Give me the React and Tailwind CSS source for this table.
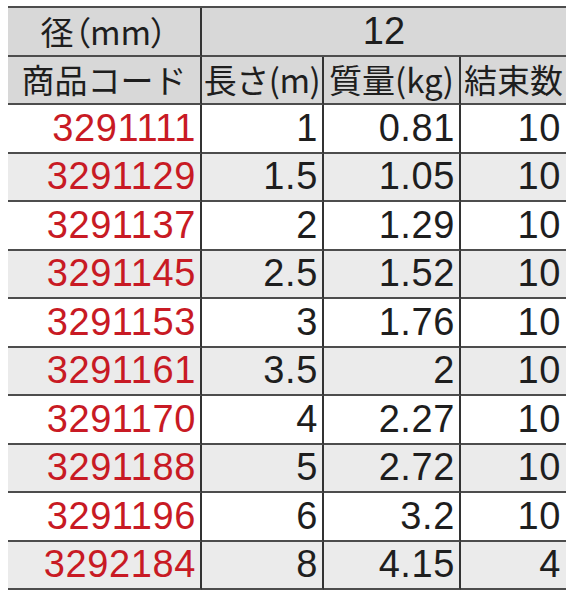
const rows = [
  ["3291111", "1", "0.81", "10"],
  ["3291129", "1.5", "1.05", "10"],
  ["3291137", "2", "1.29", "10"],
  ["3291145", "2.5", "1.52", "10"],
  ["3291153", "3", "1.76", "10"],
  ["3291161", "3.5", "2", "10"],
  ["3291170", "4", "2.27", "10"],
  ["3291188", "5", "2.72", "10"],
  ["3291196", "6", "3.2", "10"],
  ["3292184", "8", "4.15", "4"],
];

const cell = "h-[48.5px] flex items-center border-b-2 border-[#4d4d4d]";
const divider = "border-r-2 border-r-[#333]";
const head = "justify-center whitespace-nowrap bg-[#d8d8d8] text-[33px] leading-none font-['Noto_Sans_CJK_JP',sans-serif]";
const num = "justify-end text-[38px] tracking-[0.6px]";

export default function App() {
  return (
    <div className="min-h-[600px] bg-white pt-[6px] pl-[8px] font-['Liberation_Sans','Noto_Sans_CJK_JP',sans-serif] text-[#1e1e1e]">
      <div className="grid w-[558px] grid-cols-[194px_122px_137px_105px] border-t-2 border-[#4d4d4d]">
        {/* Header */}
        <div className={`${cell} ${divider} ${head} [font-feature-settings:'palt']`}>径（mm）</div>
        <div className={`${cell} col-span-3 justify-center bg-[#d8d8d8] text-[38px]`}>12</div>
        <div className={`${cell} ${divider} ${head}`}>商品コード</div>
        <div className={`${cell} ${divider} ${head} tracking-[-0.5px]`}>長さ(m)</div>
        <div className={`${cell} ${divider} ${head}`}>質量(kg)</div>
        <div className={`${cell} ${head}`}>結束数</div>

        {/* Rows */}
        {rows.map((r, i) => {
          const bg = i % 2 === 1 ? "bg-[#ebebeb]" : "bg-white";
          return [
            <div key={i + "a"} className={`${cell} ${divider} ${bg} ${num} pr-[4px] text-[#c81a24]`}>{r[0]}</div>,
            <div key={i + "b"} className={`${cell} ${divider} ${bg} ${num} pr-[4px]`}>{r[1]}</div>,
            <div key={i + "c"} className={`${cell} ${divider} ${bg} ${num} pr-[4px]`}>{r[2]}</div>,
            <div key={i + "d"} className={`${cell} ${bg} ${num} pr-[5px]`}>{r[3]}</div>,
          ];
        })}
      </div>
    </div>
  );
}
